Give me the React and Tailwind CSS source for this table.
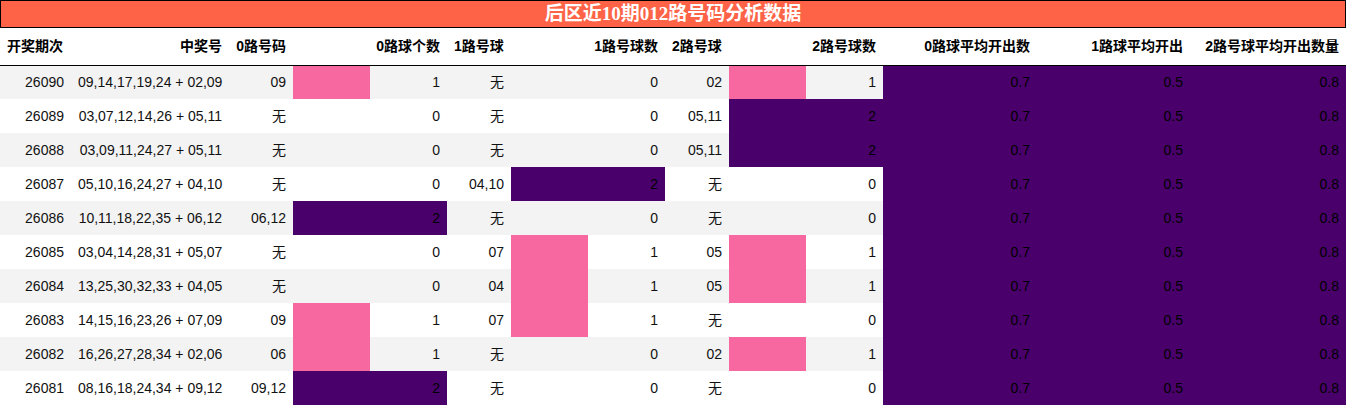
import React from 'react';

const rows = [
  ['26090', '09,14,17,19,24 + 02,09', '09', 1, '无', 0, '02', 1],
  ['26089', '03,07,12,14,26 + 05,11', '无', 0, '无', 0, '05,11', 2],
  ['26088', '03,09,11,24,27 + 05,11', '无', 0, '无', 0, '05,11', 2],
  ['26087', '05,10,16,24,27 + 04,10', '无', 0, '04,10', 2, '无', 0],
  ['26086', '10,11,18,22,35 + 06,12', '06,12', 2, '无', 0, '无', 0],
  ['26085', '03,04,14,28,31 + 05,07', '无', 0, '07', 1, '05', 1],
  ['26084', '13,25,30,32,33 + 04,05', '无', 0, '04', 1, '05', 1],
  ['26083', '14,15,16,23,26 + 07,09', '09', 1, '07', 1, '无', 0],
  ['26082', '16,26,27,28,34 + 02,06', '06', 1, '无', 0, '02', 1],
  ['26081', '08,16,18,24,34 + 09,12', '09,12', 2, '无', 0, '无', 0],
];

const headers = [
  ['开奖期次', 'text-left'],
  ['中奖号', 'text-right'],
  ['0路号码', 'text-right'],
  ['0路球个数', 'text-right'],
  ['1路号球', 'text-left'],
  ['1路号球数', 'text-right'],
  ['2路号球', 'text-left'],
  ['2路号球数', 'text-right'],
  ['0路球平均开出数', 'text-right'],
  ['1路球平均开出', 'text-right'],
  ['2路号球平均开出数量', 'text-right'],
];

const widths = ['w-[71px]', 'w-[158px]', 'w-[64px]', 'w-[154px]', 'w-[64px]', 'w-[154px]', 'w-[64px]', 'w-[154px]', 'w-[154px]', 'w-[153px]', 'w-[156px]'];

// bar background for the count columns
function barClass(n) {
  if (n === 2) return 'bg-[#49006a] text-black';
  if (n === 1) return 'bg-[linear-gradient(90deg,#f768a1_50%,transparent_50%)]';
  return '';
}

const cell = 'px-[7px] text-right align-middle';

export default function App() {
  return (
    <div className="w-[1346px] bg-white font-['Liberation_Sans','Noto_Sans_CJK_SC',sans-serif] text-[#111]">
      <div className="h-[28px] border border-black bg-[#ff6347] text-white text-center font-bold text-[19px] leading-[25px] font-['Liberation_Serif','Noto_Sans_CJK_SC',serif]">
        后区近10期012路号码分析数据
      </div>
      <table className="w-full table-fixed border-collapse">
        <colgroup>
          {widths.map((w, i) => <col key={i} className={w} />)}
        </colgroup>
        <thead>
          <tr className="h-[37px] border-b border-black">
            {headers.map(([h, a]) => (
              <th key={h} className={`px-[7px] ${a} text-[14px] font-bold text-black whitespace-nowrap`}>{h}</th>
            ))}
          </tr>
        </thead>
        <tbody className="text-[14px]">
          {rows.map((r, i) => (
            <tr key={r[0]} className={`h-[34px] ${i % 2 === 0 ? 'bg-[#f3f3f3]' : 'bg-white'}`}>
              <td className={cell}>{r[0]}</td>
              <td className={`${cell} whitespace-nowrap`}>{r[1]}</td>
              <td className={cell}>{r[2]}</td>
              <td className={`${cell} ${barClass(r[3])}`}>{r[3]}</td>
              <td className={cell}>{r[4]}</td>
              <td className={`${cell} ${barClass(r[5])}`}>{r[5]}</td>
              <td className={cell}>{r[6]}</td>
              <td className={`${cell} ${barClass(r[7])}`}>{r[7]}</td>
              <td className={`${cell} bg-[#49006a] text-black`}>0.7</td>
              <td className={`${cell} bg-[#49006a] text-black`}>0.5</td>
              <td className={`${cell} bg-[#49006a] text-black`}>0.8</td>
            </tr>
          ))}
        </tbody>
      </table>
    </div>
  );
}
